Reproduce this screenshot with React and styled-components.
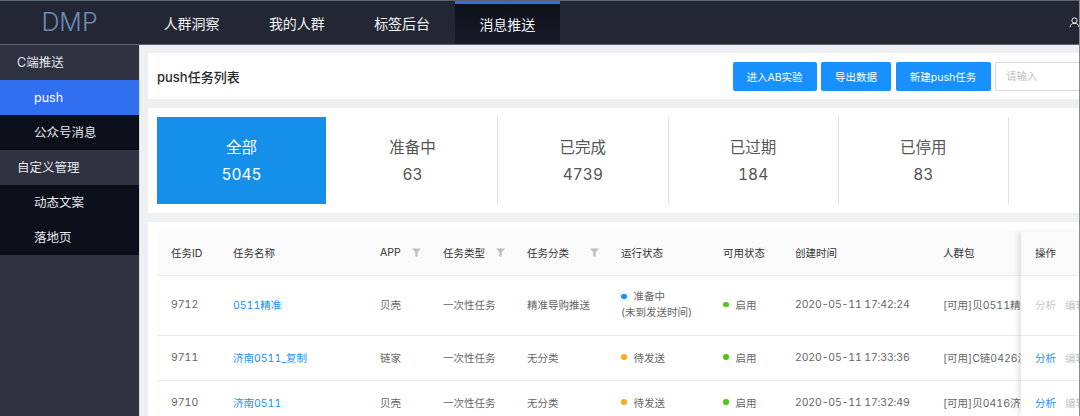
import React from 'react';
import styled, { createGlobalStyle } from 'styled-components';

const FONT = `Inter, "Noto Sans CJK SC", sans-serif`;

const Global = createGlobalStyle`
  html, body { margin: 0; padding: 0; overflow: hidden; }
  body { font-family: ${FONT}; font-feature-settings: "tnum"; background: #eff0f4; }
  * { box-sizing: border-box; }
`;

const Page = styled.div`
  position: relative;
  width: 1080px;
  height: 416px;
  overflow: hidden;
  display: flex;
  flex-direction: column;
  border-right: 1px solid #8a8d94;
`;

const Header = styled.header`
  flex: 0 0 45px;
  display: flex;
  background: #232733;
  border-top: 1px solid #5a6272;
  border-bottom: 1px solid #5f6570;
`;

const Logo = styled.div`
  flex: 0 0 139px;
  text-align: center;
  font-size: 25px;
  font-weight: 300;
  line-height: 43px;
  color: #6c8ab8;
`;

const NavItem = styled.div`
  width: 105.25px;
  text-align: center;
  font-size: 14px;
  line-height: ${p => (p.$active ? '42px' : '45px')};
  height: 43px;
  color: #f2f3f5;
  background: ${p => (p.$active ? 'linear-gradient(#0e121d, #161a26)' : 'transparent')};
  border-top: ${p => (p.$active ? '3px solid #2f6fe4' : 'none')};
`;

const UserIcon = styled.svg`
  position: absolute;
  top: 17px;
  left: 1069px;
`;

const Body = styled.div`
  flex: 1;
  display: flex;
  min-height: 0;
`;

const Side = styled.aside`
  flex: 0 0 140px;
  background: #2f3241;
  border-right: 1px solid #d8d9dd;
`;

const SideTitle = styled.div`
  height: 35px;
  line-height: 35px;
  padding-left: 17px;
  font-size: 12.5px;
  color: #e6e7ea;
`;

const SideGroup = styled.div`
  background: #0b0f1a;
`;

const SideItem = styled.div`
  height: 35px;
  line-height: 35px;
  padding-left: 34px;
  font-size: 12.5px;
  color: ${p => (p.$active ? '#fff' : '#e6e7ea')};
  background: ${p => (p.$active ? '#2f6ff0' : 'transparent')};
`;

const Main = styled.main`
  flex: 1;
  min-width: 0;
  padding: 8px 0 0 8px;
  display: flex;
  flex-direction: column;
  gap: 9px;
`;

const TitleCard = styled.section`
  flex: 0 0 46px;
  background: #fff;
  display: flex;
  align-items: center;
  padding-left: 9px;
`;

const PageTitle = styled.h1`
  flex: 1;
  margin: 0;
  font-size: 13px;
  font-weight: 500;
  color: #2b2b2b;
`;

const Actions = styled.div`
  display: flex;
  gap: 4.5px;
`;

const Button = styled.button`
  height: 29px;
  width: ${p => p.$w}px;
  padding: 0;
  border: 0;
  border-radius: 2px;
  background: #1890ff;
  color: #fff;
  font: 10.5px ${FONT};
`;

const SearchInput = styled.input`
  width: 84px;
  height: 29px;
  padding: 0 10px;
  border: 1px solid #d9d9d9;
  border-right: 0;
  border-radius: 2px 0 0 2px;
  font: 10.5px ${FONT};
  background: #fff;
  &::placeholder { color: #bfbfbf; }
`;

const StatCard = styled.section`
  flex: 0 0 105px;
  background: #fff;
  display: flex;
  align-items: stretch;
  padding: 9px 0 9px 9px;
`;

const Stat = styled.div`
  flex: 0 0 ${p => (p.$active ? '169px' : '170.25px')};
  display: flex;
  flex-direction: column;
  align-items: center;
  gap: 7px;
  padding-top: 21px;
  background: ${p => (p.$active ? '#1490ea' : 'transparent')};
  color: ${p => (p.$active ? '#fff' : '#555')};
  border-right: ${p => (p.$active ? 'none' : '1px solid #e0e0e0')};
  margin-right: ${p => (p.$active ? '2px' : '0')};
`;

const StatLabel = styled.div`
  font-size: 15.5px;
  line-height: 20px;
`;

const StatValue = styled.div`
  font-size: 15.5px;
  line-height: 20px;
`;

const TableCard = styled.section`
  flex: 1;
  position: relative;
  background: #fff;
  padding: 9px 0 0 9px;
  overflow: hidden;
`;

const Table = styled.div`
  display: flex;
  flex-direction: column;
`;

const Row = styled.div`
  display: grid;
  grid-template-columns: 62px 147px 63px 84px 94px 102px 72px 148px 92px;
  align-items: center;
  height: ${p => p.$h}px;
  padding-bottom: 2px;
  border-bottom: 1px solid #ececec;
  background: ${p => (p.$head ? '#fafafa' : '#fff')};
  font-size: 10.5px;
  color: ${p => (p.$head ? '#333' : '#666')};
`;

const Cell = styled.div`
  padding: 0 8px 0 14px;
  white-space: nowrap;
  overflow: hidden;
  display: flex;
  align-items: center;
  gap: 7px;
`;

const FilterCell = styled(Cell)`
  justify-content: space-between;
`;

const TimeCell = styled(Cell)`
  letter-spacing: -0.15px;
`;

const FilterIcon = styled.svg`
  flex: none;
`;

const Link = styled.span`
  color: #1890ff;
`;

const Dot = styled.span`
  flex: none;
  width: 5.5px;
  height: 5.5px;
  border-radius: 50%;
  background: ${p => p.$c};
  ${p => p.$ring && `box-shadow: 0 0 0 2px #e6f2ff;`}
`;

const StatusBox = styled.div`
  display: flex;
  flex-direction: column;
  line-height: 16px;
`;

const StatusLine = styled.div`
  display: flex;
  align-items: center;
  gap: 7px;
`;

const FixedCol = styled.div`
  position: absolute;
  top: 9px;
  bottom: 0;
  left: 873px;
  width: 70px;
  background: #fff;
  box-shadow: -4px 0 6px -2px rgba(0, 0, 0, 0.14);
  display: flex;
  flex-direction: column;
`;

const FixedCell = styled.div`
  height: ${p => p.$h}px;
  flex: none;
  display: flex;
  align-items: center;
  gap: 9px;
  padding: 0 0 2px 14px;
  font-size: 10.5px;
  white-space: nowrap;
  color: #333;
  background: ${p => (p.$head ? '#fafafa' : '#fff')};
  border-bottom: 1px solid #ececec;
`;

const OpLink = styled.span`
  color: ${p => (p.$on ? '#1890ff' : '#c8c8c8')};
`;

const Filter = () => (
  <FilterIcon width="9" height="9" viewBox="0 0 9 9">
    <path d="M0 0.5h9L5.7 4.2v4.3H3.3V4.2z" fill="#bfbfbf" />
  </FilterIcon>
);

const stats = [
  ['全部', '5045', true],
  ['准备中', '63'],
  ['已完成', '4739'],
  ['已过期', '184'],
  ['已停用', '83'],
];

const rows = [
  { id: '9712', name: '0511精准', app: '贝壳', cat: '精准导购推送', time: '2020-05-11 17:42:24', crowd: '[可用]贝0511精准', h: 60, wait: true },
  { id: '9711', name: '济南0511_复制', app: '链家', cat: '无分类', time: '2020-05-11 17:33:36', crowd: '[可用]C链0426济南', h: 45 },
  { id: '9710', name: '济南0511', app: '贝壳', cat: '无分类', time: '2020-05-11 17:32:49', crowd: '[可用]贝0416济南', h: 45 },
];

export default function App() {
  return (
    <Page>
      <Global />
      <Header>
        <Logo>DMP</Logo>
        <NavItem>人群洞察</NavItem>
        <NavItem>我的人群</NavItem>
        <NavItem>标签后台</NavItem>
        <NavItem $active>消息推送</NavItem>
      </Header>
      <UserIcon width="11" height="11" viewBox="0 0 11 11" fill="none" stroke="#f0f0f0" strokeWidth="1">
        <circle cx="5.5" cy="3.4" r="2.6" />
        <path d="M1 10.2c.3-2.6 2-3.9 4.5-3.9s4.2 1.3 4.5 3.9" />
      </UserIcon>
      <Body>
        <Side>
          <SideTitle>C端推送</SideTitle>
          <SideGroup>
            <SideItem $active>push</SideItem>
            <SideItem>公众号消息</SideItem>
          </SideGroup>
          <SideTitle>自定义管理</SideTitle>
          <SideGroup>
            <SideItem>动态文案</SideItem>
            <SideItem>落地页</SideItem>
          </SideGroup>
        </Side>
        <Main>
          <TitleCard>
            <PageTitle>push任务列表</PageTitle>
            <Actions>
              <Button $w={84}>进入AB实验</Button>
              <Button $w={70}>导出数据</Button>
              <Button $w={95}>新建push任务</Button>
              <SearchInput placeholder="请输入" />
            </Actions>
          </TitleCard>
          <StatCard>
            {stats.map(([label, value, active]) => (
              <Stat key={label} $active={active}>
                <StatLabel>{label}</StatLabel>
                <StatValue>{value}</StatValue>
              </Stat>
            ))}
          </StatCard>
          <TableCard>
            <Table>
              <Row $head $h={45}>
                <Cell>任务ID</Cell>
                <Cell>任务名称</Cell>
                <FilterCell>APP<Filter /></FilterCell>
                <FilterCell>任务类型<Filter /></FilterCell>
                <FilterCell>任务分类<Filter /></FilterCell>
                <Cell>运行状态</Cell>
                <Cell>可用状态</Cell>
                <Cell>创建时间</Cell>
                <Cell>人群包</Cell>
              </Row>
              {rows.map(r => (
                <Row key={r.id} $h={r.h}>
                  <Cell>{r.id}</Cell>
                  <Cell><Link>{r.name}</Link></Cell>
                  <Cell>{r.app}</Cell>
                  <Cell>一次性任务</Cell>
                  <Cell>{r.cat}</Cell>
                  <Cell>
                    {r.wait ? (
                      <StatusBox>
                        <StatusLine><Dot $c="#1890ff" $ring />准备中</StatusLine>
                        <div>(未到发送时间)</div>
                      </StatusBox>
                    ) : (
                      <StatusLine><Dot $c="#faad14" />待发送</StatusLine>
                    )}
                  </Cell>
                  <Cell><Dot $c="#52c41a" />启用</Cell>
                  <TimeCell>{r.time}</TimeCell>
                  <Cell>{r.crowd}</Cell>
                </Row>
              ))}
            </Table>
            <FixedCol>
              <FixedCell $head $h={45}>操作</FixedCell>
              {rows.map(r => (
                <FixedCell key={r.id} $h={r.h}>
                  <OpLink $on={!r.wait}>分析</OpLink>
                  <OpLink>编辑</OpLink>
                </FixedCell>
              ))}
            </FixedCol>
          </TableCard>
        </Main>
      </Body>
    </Page>
  );
}
